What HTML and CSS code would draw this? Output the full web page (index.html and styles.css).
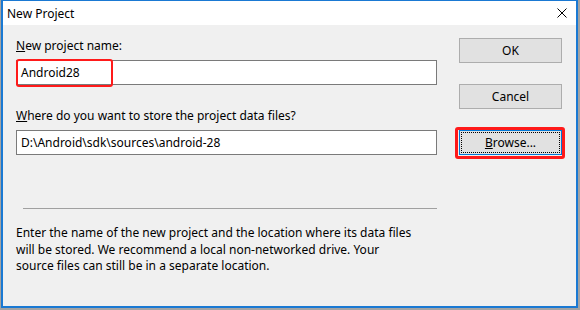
FILE: index.html
```html
<!DOCTYPE html>
<html lang="en">
  <head>
    <meta charset="UTF-8" />
    <title>New Project</title>
    <link rel="stylesheet" href="styles.css">
  </head>
  <body>
    <div class="window">
      <div class="titlebar">
        <span class="title">New Project</span>
        <svg class="close" width="10" height="10" viewBox="0 0 10 10">
          <path d="M0.5 0.5 L9.5 9.5 M9.5 0.5 L0.5 9.5" stroke="#000" stroke-width="1" fill="none" />
        </svg>
      </div>

      <div class="content">
        <div class="main">
          <label class="label"><u>N</u>ew project name:</label>
          <div class="field">
            <span class="value">Android28</span>
            <span class="mark mark-name"></span>
          </div>

          <label class="label label-gap"><u>W</u>here do you want to store the project data files?</label>
          <div class="field">
            <span class="value">D:\Android\sdk\sources\android-28</span>
          </div>

          <hr class="divider">

          <p class="note">
            Enter the name of the new project and the location where its data files<br>
            will be stored. We recommend a local non-networked drive. Your<br>
            source files can still be in a separate location.
          </p>
        </div>

        <div class="side">
          <button class="btn">OK</button>
          <button class="btn">Cancel</button>
          <div class="btn-wrap">
            <button class="btn btn-focus"><span class="focus-ring"><u>B</u>rowse...</span></button>
            <span class="mark mark-browse"></span>
          </div>
        </div>
      </div>
    </div>
  </body>
</html>
```

FILE: styles.css
```css
body {
  margin: 0;
  background-color: #a3a3a3;
  font-family: "Noto Sans", "Open Sans", sans-serif;
  font-size: 12px;
  color: #000;
}

.window {
  box-sizing: border-box;
  width: 577px;
  height: 308px;
  margin-left: 1px;
  border: 1px solid #1a79d3;
  border-width: 1px 2px 2px 2px;
  background-color: #f0f0f0;
  display: flex;
  flex-direction: column;
}

.titlebar {
  height: 24px;
  background-color: #fff;
  display: flex;
  align-items: center;
  justify-content: space-between;
  padding: 0 9px 0 4px;
}

.title {
  font-size: 12px;
}

.content {
  display: flex;
  padding: 13px 0 0 13px;
}

.main {
  width: 421px;
  display: flex;
  flex-direction: column;
}

.label {
  display: block;
  line-height: 16px;
  margin-bottom: 6px;
}

.label-gap {
  margin-top: 23px;
}

.field {
  position: relative;
  box-sizing: border-box;
  height: 25px;
  background-color: #fff;
  border: 1px solid #7a7a7a;
  padding: 0 4px;
  display: flex;
  align-items: center;
}

.mark {
  position: absolute;
  box-sizing: border-box;
  border: 2px solid #ff1a1a;
  border-radius: 3px;
}

.mark-name {
  left: -1px;
  top: -2px;
  width: 97px;
  height: 28px;
}

.divider {
  margin: 53px 0 0 7px;
  border: none;
  border-top: 1px solid #a0a0a0;
  height: 0;
}

.note {
  margin: 16px 0 0;
  white-space: nowrap;
  line-height: 16.5px;
}

.side {
  margin-left: 22px;
  width: 103px;
  display: flex;
  flex-direction: column;
  gap: 21px;
}

.btn {
  box-sizing: border-box;
  width: 103px;
  height: 25px;
  background-color: #e1e1e1;
  border: 1px solid #adadad;
  font-family: inherit;
  font-size: 12px;
  color: #000;
  padding: 0;
}

.btn-wrap {
  position: relative;
}

.btn-focus {
  border-color: #0078d7;
  padding: 1px;
}

.focus-ring {
  display: flex;
  align-items: center;
  justify-content: center;
  height: 100%;
  box-sizing: border-box;
  border: 1px dotted #000;
}

.mark-browse {
  left: -4px;
  top: -3px;
  right: -3px;
  bottom: -4px;
  border-width: 3px;
}
```
